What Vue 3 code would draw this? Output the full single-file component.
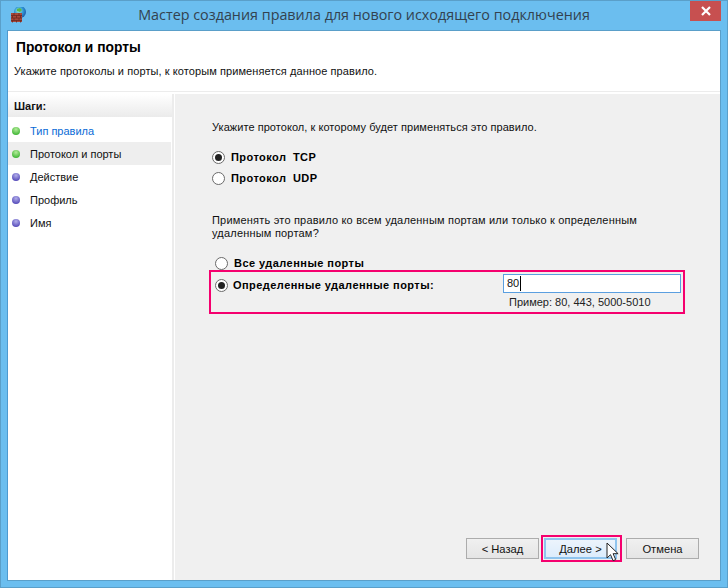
<script setup>
const steps = [
  { label: 'Тип правила', state: 'done', link: true },
  { label: 'Протокол и порты', state: 'done', active: true },
  { label: 'Действие', state: 'todo' },
  { label: 'Профиль', state: 'todo' },
  { label: 'Имя', state: 'todo' },
]
</script>

<template>
  <div class="window">
    <div class="titlebar">
      <svg class="app-icon" width="18" height="18" viewBox="0 0 18 18">
        <defs>
          <radialGradient id="globe" cx="0.4" cy="0.4" r="0.7">
            <stop offset="0" stop-color="#b8f0c8" />
            <stop offset="0.5" stop-color="#2f9ad8" />
            <stop offset="1" stop-color="#1c4f9c" />
          </radialGradient>
        </defs>
        <circle cx="9" cy="5" r="6" fill="url(#globe)" />
        <path d="M6 2l3-1 2 2-2 2-3-1z" fill="#58b848" />
        <rect x="0" y="6" width="11" height="9" fill="#a8483a" />
        <path d="M0 8.500h11M0 11h11M0 13.500h11M3 6v2.500M8 6v2.500M1.500 8.500V11M5.500 8.500V11M9.500 8.500V11M3 11v2.500M8 11v2.500M1.500 13.500v2M5.500 13.500v2M9.500 13.500v2" stroke="#6d2a22" stroke-width="0.800" fill="none" />
      </svg>
      <div class="title">Мастер создания правила для нового исходящего подключения</div>
      <div class="close">
        <svg width="12" height="10" viewBox="0 0 12 10">
          <path d="M2 1l8 8M10 1l-8 8" stroke="#fff" stroke-width="2.200" fill="none" />
        </svg>
      </div>
    </div>

    <div class="client">
      <header class="head">
        <h1>Протокол и порты</h1>
        <p>Укажите протоколы и порты, к которым применяется данное правило.</p>
      </header>

      <div class="body">
        <aside class="sidebar">
          <div class="side-head">Шаги:</div>
          <ul class="steps">
            <li v-for="s in steps" :key="s.label" class="step" :class="{ active: s.active, link: s.link }">
              <span class="dot" :class="s.state"></span>
              <span>{{ s.label }}</span>
            </li>
          </ul>
        </aside>

        <main class="main">
          <p class="lead">Укажите протокол, к которому будет применяться это правило.</p>

          <div class="proto">
            <label class="radio"><span class="mark on"></span><b>Протокол TCP</b></label>
            <label class="radio"><span class="mark"></span><b>Протокол UDP</b></label>
          </div>

          <p class="question">Применять это правило ко всем удаленным портам или только к определенным удаленным портам?</p>

          <div class="ports">
            <label class="radio all"><span class="mark"></span><b>Все удаленные порты</b></label>
            <div class="specific">
              <label class="radio"><span class="mark on"></span><b>Определенные удаленные порты:</b></label>
              <div class="field">
                <div class="input">80<span class="caret"></span></div>
                <div class="hint">Пример: 80, 443, 5000-5010</div>
              </div>
            </div>
          </div>

          <footer class="buttons">
            <button class="btn">&lt; Назад</button>
            <span class="next-wrap">
              <button class="btn primary">Далее &gt;</button>
              <svg class="cursor" width="14" height="20" viewBox="0 0 14 20">
                <path d="M1 1v15l3.500-3.300 2.600 6 2.600-1.100-2.600-5.900h5z" fill="#fff" stroke="#222" stroke-width="1" />
              </svg>
            </span>
            <button class="btn">Отмена</button>
          </footer>
        </main>
      </div>
    </div>
  </div>
</template>

<style scoped>
.window {
  width: 728px;
  height: 588px;
  box-sizing: border-box;
  background: #6bbeef;
  border: 1px solid #5a9fc9;
  display: flex;
  flex-direction: column;
  font-family: "Liberation Sans", Arial, sans-serif;
  font-size: 11px;
  color: #111;
  overflow: hidden;
}
.titlebar {
  height: 29px;
  flex: none;
  position: relative;
  display: flex;
  justify-content: center;
}
.app-icon { position: absolute; left: 10px; top: 6px; }
.title {
  font-family: "Open Sans", sans-serif;
  font-size: 14.350px;
  line-height: 28px;
  color: #33424f;
}
.close {
  position: absolute;
  right: 6px;
  top: 0;
  width: 31px;
  height: 20px;
  background: #c75050;
  display: flex;
  align-items: center;
  justify-content: center;
}
.client {
  flex: 1;
  margin: 0 6px 6px 6px;
  background: #fff;
  border: 1px solid #5a9fc9;
  border-left-color: #4d9ad0;
  display: flex;
  flex-direction: column;
  min-height: 0;
}
.head {
  height: 61px;
  flex: none;
  box-sizing: border-box;
  padding: 9px 0 0 6px;
  border-bottom: 1px solid #ececec;
}
.head h1 {
  margin: 0 0 0 2px;
  font-size: 13.800px;
  line-height: 16px;
  font-weight: 700;
  color: #000;
}
.head p {
  margin: 8px 0 0;
  font-size: 11px;
  line-height: 14px;
  letter-spacing: 0.080px;
}
.body {
  flex: 1;
  display: flex;
  min-height: 0;
  padding-top: 2px;
}
.sidebar {
  width: 164px;
  flex: none;
  border-right: 2px solid #ececec;
  margin-right: 1px;
}
.side-head {
  height: 23px;
  box-sizing: border-box;
  padding: 5px 0 0 6px;
  font-weight: 700;
  line-height: 14px;
  background: linear-gradient(#fff, #ebebeb);
}
.steps {
  list-style: none;
  margin: 2px 0 0;
  padding: 0;
}
.step {
  height: 23px;
  display: flex;
  align-items: center;
  gap: 10px;
  padding-left: 4px;
  margin-right: 1px;
}
.step.active { background: #eeeeee; }
.step.link { color: #0a6bd6; }
.dot {
  width: 8px;
  height: 8px;
  border-radius: 50%;
  flex: none;
}
.dot.done { background: radial-gradient(circle at 50% 30%, #b4ec9a, #45b83a 75%); }
.dot.todo { background: radial-gradient(circle at 50% 30%, #b2aeea, #5a50bc 75%); }
.main {
  flex: 1;
  background: #f0f0f0;
  display: flex;
  flex-direction: column;
  padding: 27px 21px 18px 37px;
  min-width: 0;
}
.main p { margin: 0; line-height: 13px; }
.lead { flex: none; letter-spacing: 0.050px; }
.proto {
  margin-top: 16px;
  display: flex;
  flex-direction: column;
  gap: 7px;
  word-spacing: 3px;
}
.radio {
  display: flex;
  align-items: center;
  gap: 6px;
  height: 14px;
  letter-spacing: 0.450px;
  color: #000;
}
.radio b { font-weight: 700; }
.mark {
  width: 13px;
  height: 13px;
  box-sizing: border-box;
  border: 1px solid #6a6a6a;
  border-radius: 50%;
  background: #fff;
  flex: none;
  display: flex;
  align-items: center;
  justify-content: center;
}
.mark.on::after {
  content: "";
  width: 7px;
  height: 7px;
  border-radius: 50%;
  background: #222;
}
.question {
  margin-top: 29px !important;
  width: 440px;
  letter-spacing: 0.200px;
}
.ports {
  margin: 16px 0 0 -3px;
  width: 476px;
}
.all { margin-left: 6px; }
.specific {
  height: 44px;
  box-sizing: border-box;
  border: 2px solid #f5006e;
  display: flex;
  padding-left: 4px;
}
.specific .radio { margin-top: 6px; width: 288px; flex: none; gap: 5px; }
.field { padding-top: 2px; }
.input {
  width: 178px;
  height: 19px;
  box-sizing: border-box;
  background: #fff;
  border: 1px solid #5b9fe0;
  padding-left: 3px;
  line-height: 17px;
  display: flex;
  align-items: center;
}
.caret {
  width: 1px;
  height: 15px;
  background: #000;
  margin-left: 1px;
}
.hint {
  margin: 2px 0 0 6px;
  line-height: 14px;
  color: #222;
}
.buttons {
  margin-top: auto;
  display: flex;
  align-items: center;
  justify-content: flex-end;
}
.btn {
  width: 73px;
  height: 21px;
  box-sizing: border-box;
  border: 1px solid #acacac;
  background: linear-gradient(#f0f0f0, #e5e5e5);
  font-family: inherit;
  font-size: 11.200px;
  color: #111;
  padding: 0;
}
.next-wrap {
  width: 81px;
  height: 27px;
  box-sizing: border-box;
  border: 2px solid #f5006e;
  margin: 0 4px 0 2px;
  display: flex;
  align-items: center;
  justify-content: flex-start;
  padding-left: 1px;
  position: relative;
}
.primary {
  flex: none;
  border: 2px solid #8fc4ee;
  background: linear-gradient(#ecf4fc, #dcecfc);
}
.cursor {
  position: absolute;
  left: 63px;
  top: 5px;
}
</style>

<style>
html, body { margin: 0; padding: 0; background: #6bbeef; }
</style>
